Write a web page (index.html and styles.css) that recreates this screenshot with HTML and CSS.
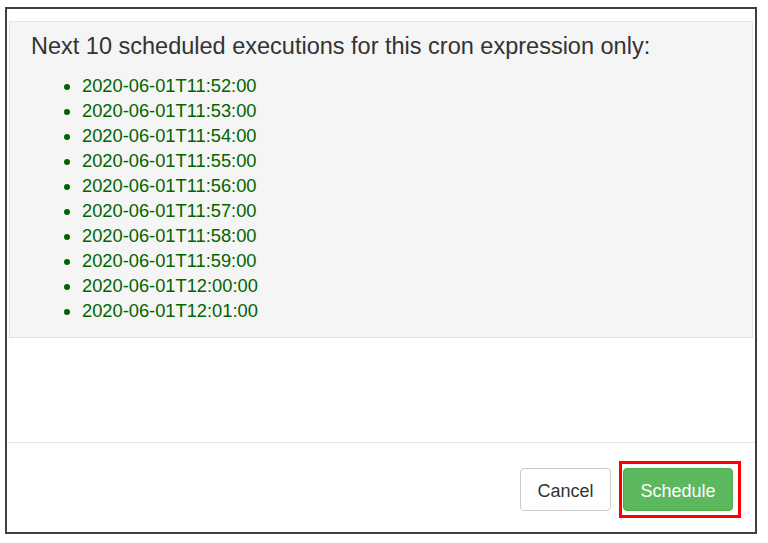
FILE: index.html
```html
<!DOCTYPE html>
<html>
<head>
<meta charset="utf-8">
<link rel="stylesheet" href="styles.css">
</head>
<body>
<div class="modal">
  <div class="modal-body">
    <div class="well">
      <h4 class="title">Next 10 scheduled executions for this cron expression only:</h4>
      <ul class="times">
        <li>2020-06-01T11:52:00</li>
        <li>2020-06-01T11:53:00</li>
        <li>2020-06-01T11:54:00</li>
        <li>2020-06-01T11:55:00</li>
        <li>2020-06-01T11:56:00</li>
        <li>2020-06-01T11:57:00</li>
        <li>2020-06-01T11:58:00</li>
        <li>2020-06-01T11:59:00</li>
        <li>2020-06-01T12:00:00</li>
        <li>2020-06-01T12:01:00</li>
      </ul>
    </div>
  </div>
  <div class="modal-footer">
    <button class="btn btn-default">Cancel</button>
    <span class="highlight"><button class="btn btn-success">Schedule</button></span>
  </div>
</div>
</body>
</html>
```
FILE: styles.css
```css
html, body {
  margin: 0;
  padding: 0;
  background: #fff;
  font-family: "Liberation Sans", Arial, sans-serif;
  color: #333;
}
.modal {
  box-sizing: border-box;
  margin: 7px 0 0 5px;
  width: 752px;
  height: 527px;
  border: 2px solid #404040;
  display: flex;
  flex-direction: column;
}
.modal-body {
  height: 434px;
  box-sizing: border-box;
  padding: 12px 2px 0 2px;
  border-bottom: 1px solid #e5e5e5;
}
.well {
  background: #f5f5f5;
  border: 1px solid #e3e3e3;
  height: 317px;
  box-sizing: border-box;
}
.title {
  margin: 12px 0 0 21px;
  font-size: 23.5px;
  line-height: 25px;
  font-weight: normal;
  color: #333;
}
.times {
  margin: 14px 0 0 0;
  padding: 0 0 0 72px;
  color: #006400;
  font-size: 18.3px;
  line-height: 25px;
}
.modal-footer {
  flex: 1;
  display: flex;
  justify-content: flex-end;
  align-items: flex-start;
  padding: 18px 14px 0 0;
}
.btn {
  font-family: "Liberation Sans", Arial, sans-serif;
  font-size: 18px;
  height: 43px;
  border-radius: 4px;
  border: 1px solid #ccc;
  box-sizing: border-box;
  padding: 3px 0 0 0;
  margin: 0;
  cursor: pointer;
}
.btn-default {
  width: 91px;
  background: #fff;
  color: #333;
  margin-top: 7px;
  margin-right: 8px;
}
.highlight {
  display: block;
  border: 3px solid #ff0000;
  padding: 4px 5px 4px 1px;
}
.btn-success {
  display: block;
  width: 110px;
  background: #5cb85c;
  border-color: #4cae4c;
  color: #fff;
}
```
